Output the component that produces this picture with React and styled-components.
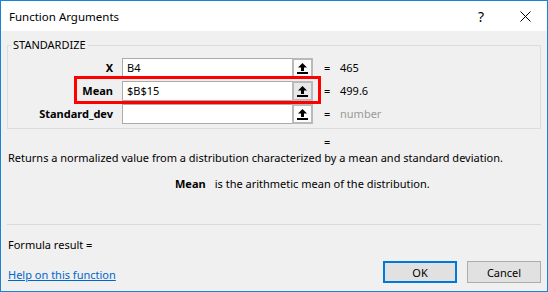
import React from 'react';
import styled, { createGlobalStyle } from 'styled-components';

const Global = createGlobalStyle`
  html, body { margin: 0; padding: 0; background: #f0f0f0; }
  body { font-family: "Noto Sans", "Segoe UI", sans-serif; font-size: 11px; color: #000; }
  * { box-sizing: border-box; }
`;

const Window = styled.div`
  width: 548px;
  height: 292px;
  border: 1px solid #1883d7;
  background: #f0f0f0;
  display: flex;
  flex-direction: column;
  overflow: hidden;
`;

const TitleBar = styled.div`
  height: 30px;
  flex: none;
  background: #fff;
  display: flex;
  align-items: center;
  padding-left: 8px;
`;

const Title = styled.div`
  flex: 1;
  font-size: 11.5px;
`;

const TitleButton = styled.div`
  width: 44px;
  height: 30px;
  display: flex;
  align-items: center;
  justify-content: center;
  font-size: 14px;
`;

const Body = styled.div`
  flex: 1;
  display: flex;
  flex-direction: column;
  padding: 6px 6px 7px 6px;
`;

const Group = styled.fieldset`
  margin: 0;
  padding: 0;
  border: 1px solid #dcdcdc;
  min-width: 0;
`;

const Legend = styled.legend`
  margin-left: 3px;
  padding: 0 2px;
  line-height: 16px;
`;

const ArgGrid = styled.div`
  position: relative;
  display: grid;
  grid-template-columns: 114px 191px 27px 1fr;
  grid-auto-rows: 20px;
  row-gap: 3px;
  padding: 5px 0 4px 0;
`;

const ArgLabel = styled.div`
  font-weight: bold;
  text-align: right;
  padding-right: 9px;
  line-height: 20px;
`;

const Field = styled.div`
  display: flex;
  border: 1px solid #ababab;
  background: #fff;
`;

const FieldText = styled.div`
  flex: 1;
  padding-left: 4px;
  line-height: 18px;
`;

const RefButton = styled.div`
  width: 21px;
  margin: -1px -1px -1px 0;
  border: 2px solid #b9b9b9;
  background: ${p => (p.$active ? '#e8e8e8' : '#fcfcfc')};
  display: flex;
  align-items: center;
  justify-content: center;
`;

const Eq = styled.div`
  padding-left: 11px;
  line-height: 20px;
`;

const Value = styled.div`
  line-height: 20px;
  color: ${p => (p.$hint ? '#9a9a9a' : '#000')};
`;

const Highlight = styled.div`
  position: absolute;
  left: 66px;
  top: 23px;
  width: 247px;
  height: 28px;
  border: 3px solid #ff0000;
  pointer-events: none;
`;

const ResultEq = styled.div`
  margin-top: 5px;
  padding-left: 317px;
  line-height: 16px;
`;

const Description = styled.div`
  line-height: 16px;
  padding-left: 1px;
  white-space: nowrap;
`;

const ArgHelp = styled.div`
  margin-top: 10px;
  display: flex;
  line-height: 16px;
`;

const ArgHelpName = styled.span`
  font-weight: bold;
  margin-left: 168px;
  margin-right: 9px;
`;

const Separator = styled.div`
  margin-top: 32px;
  height: 1px;
  flex: none;
  background: #d9d9d9;
`;

const Result = styled.div`
  margin-top: 12px;
  line-height: 16px;
  padding-left: 1px;
`;

const Footer = styled.div`
  margin-top: 8px;
  display: flex;
  align-items: flex-end;
  gap: 10px;
`;

const HelpLink = styled.a`
  flex: 1;
  color: #0066cc;
  text-decoration: underline;
  line-height: 16px;
  padding-left: 1px;
`;

const Button = styled.div`
  width: 74px;
  height: 22px;
  background: #e1e1e1;
  border: ${p => (p.$primary ? '2px solid #0078d7' : '1px solid #adadad')};
  display: flex;
  align-items: center;
  justify-content: center;
`;

const UpArrow = () => (
  <svg width="11" height="12" viewBox="0 0 11 12">
    <path d="M5.5 1 L1 5.5 H4 V9 H7 V5.5 H10 Z" fill="#000" />
    <rect x="0" y="10" width="11" height="2" fill="#000" />
  </svg>
);

const CloseIcon = () => (
  <svg width="11" height="11" viewBox="0 0 11 11">
    <path d="M0.5 0.5 L10.5 10.5 M10.5 0.5 L0.5 10.5" stroke="#000" strokeWidth="1" />
  </svg>
);

const args = [
  { name: 'X', text: 'B4', value: '465' },
  { name: 'Mean', text: '$B$15', value: '499.6', active: true },
  { name: 'Standard_dev', text: '', value: 'number', hint: true },
];

export default function App() {
  return (
    <>
      <Global />
      <Window>
        <TitleBar>
          <Title>Function Arguments</Title>
          <TitleButton>?</TitleButton>
          <TitleButton><CloseIcon /></TitleButton>
        </TitleBar>
        <Body>
          <Group>
            <Legend>STANDARDIZE</Legend>
            <ArgGrid>
              {args.map(a => (
                <React.Fragment key={a.name}>
                  <ArgLabel>{a.name}</ArgLabel>
                  <Field>
                    <FieldText>{a.text}</FieldText>
                    <RefButton $active={a.active}><UpArrow /></RefButton>
                  </Field>
                  <Eq>=</Eq>
                  <Value $hint={a.hint}>{a.value}</Value>
                </React.Fragment>
              ))}
              <Highlight />
            </ArgGrid>
          </Group>
          <ResultEq>=</ResultEq>
          <Description>
            Returns a normalized value from a distribution characterized by a mean and standard deviation.
          </Description>
          <ArgHelp>
            <ArgHelpName>Mean</ArgHelpName>
            <span>is the arithmetic mean of the distribution.</span>
          </ArgHelp>
          <Separator />
          <Result>Formula result =</Result>
          <Footer>
            <HelpLink href="#">Help on this function</HelpLink>
            <Button $primary>OK</Button>
            <Button>Cancel</Button>
          </Footer>
        </Body>
      </Window>
    </>
  );
}
